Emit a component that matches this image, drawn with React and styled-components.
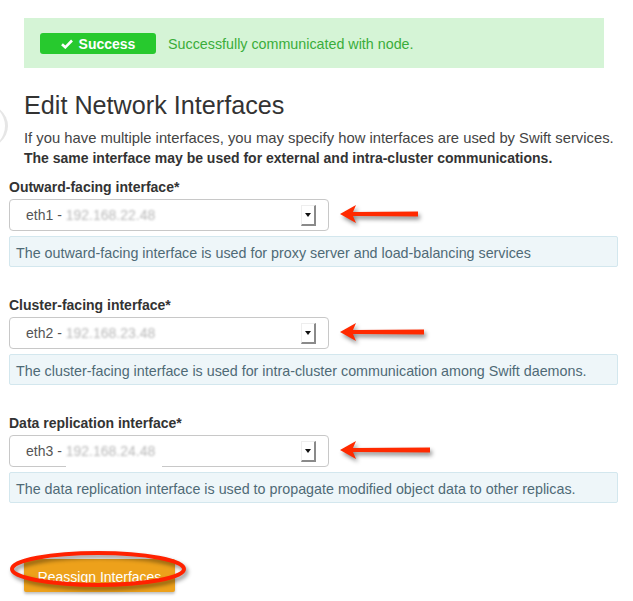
import React from "react";
import styled, { createGlobalStyle } from "styled-components";

const GlobalStyle = createGlobalStyle`
  body {
    margin: 0;
    background: #fff;
    font-family: "Liberation Sans", Arial, sans-serif;
    color: #333;
  }
`;

const interfaces = [
  {
    label: "Outward-facing interface*",
    eth: "eth1",
    ip: "192.168.22.48",
    arrow: 80,
    help: "The outward-facing interface is used for proxy server and load-balancing services",
  },
  {
    label: "Cluster-facing interface*",
    eth: "eth2",
    ip: "192.168.23.48",
    arrow: 86,
    help: "The cluster-facing interface is used for intra-cluster communication among Swift daemons.",
  },
  {
    label: "Data replication interface*",
    eth: "eth3",
    ip: "192.168.24.48",
    arrow: 92,
    patch: true,
    help: "The data replication interface is used to propagate modified object data to other replicas.",
  },
];

const App = () => {
  return (
    <Page>
      <GlobalStyle />
      <EdgeArc />
      <Alert>
        <Badge>
          <Check viewBox="0 0 12 10">
            <path d="M1 5.2 L4.3 8.3 L11 1.5" />
          </Check>
          Success
        </Badge>
        <AlertText>Successfully communicated with node.</AlertText>
      </Alert>

      <Title>Edit Network Interfaces</Title>
      <Intro>
        <span>If you have multiple interfaces, you may specify how interfaces are used by Swift services.</span>
        <br />
        <strong>The same interface may be used for external and intra-cluster communications.</strong>
      </Intro>

      {interfaces.map((item) => (
        <Field key={item.eth}>
          <Label>{item.label}</Label>
          <SelectRow>
            <Select>
              <SelectText>
                {item.eth} - <Blurred>{item.ip}</Blurred>
              </SelectText>
              <ArrowButton>
                <Caret />
              </ArrowButton>
              {item.patch && <WhitePatch />}
            </Select>
            <RedArrow width={item.arrow} />
          </SelectRow>
          <Help>{item.help}</Help>
        </Field>
      ))}

      <ButtonWrap>
        <Button>Reassign Interfaces</Button>
        <Ellipse viewBox="0 0 180 40">
          <ellipse cx="90" cy="20" rx="86" ry="16" />
        </Ellipse>
      </ButtonWrap>
    </Page>
  );
};

const RedArrow = ({ width }) => (
  <ArrowSvg width={width + 6} height="30" viewBox={`0 0 ${width + 6} 30`}>
    <path d={`M2 14 L18 5 L15 12 L${width} 11.5 L${width} 16.5 L15 16 L18 23 Z`} />
  </ArrowSvg>
);

const Page = styled.div`
  position: relative;
  width: 633px;
  height: 601px;
  overflow: hidden;
  padding: 18px 15px 0 9px;
  box-sizing: border-box;
`;

const EdgeArc = styled.div`
  position: absolute;
  left: -45px;
  top: 103px;
  width: 50px;
  height: 46px;
  border-radius: 50%;
  border-right: 3px solid #e6e6e6;
`;

const Alert = styled.div`
  display: flex;
  align-items: center;
  margin-left: 15px;
  width: 580px;
  height: 50px;
  padding: 1px 0 0 16px;
  box-sizing: border-box;
  background: #d5f4d6;
`;

const Badge = styled.span`
  display: inline-flex;
  align-items: center;
  justify-content: center;
  width: 116px;
  height: 21px;
  border-radius: 3px;
  background: #27c92e;
  color: #fff;
  font-weight: bold;
  font-size: 14px;
`;

const Check = styled.svg`
  width: 12px;
  height: 10px;
  margin-right: 6px;
  path {
    fill: none;
    stroke: #fff;
    stroke-width: 2.6;
  }
`;

const AlertText = styled.span`
  margin-left: 12px;
  font-size: 14.3px;
  color: #3aad3a;
`;

const Title = styled.h1`
  margin: 22px 0 0 15px;
  font-size: 25.2px;
  line-height: 30px;
  font-weight: normal;
  color: #333;
`;

const Intro = styled.p`
  margin: 8px 0 0 15px;
  font-size: 14px;
  line-height: 20px;
  color: #444;
  span {
    font-size: 14.8px;
  }
  strong {
    color: #333;
  }
`;

const Field = styled.div`
  margin-top: 9px;
  & + & {
    margin-top: 28px;
  }
`;

const Label = styled.div`
  font-size: 14px;
  line-height: 20px;
  font-weight: bold;
  color: #333;
  margin-bottom: 2px;
`;

const SelectRow = styled.div`
  display: flex;
  align-items: center;
`;

const Select = styled.div`
  position: relative;
  display: flex;
  align-items: center;
  justify-content: space-between;
  width: 320px;
  height: 32px;
  box-sizing: border-box;
  border: 1px solid #c8c8c8;
  border-radius: 4px;
  padding: 0 12px 0 16px;
  background: #fff;
`;

const SelectText = styled.span`
  font-size: 14px;
  color: #555;
`;

const Blurred = styled.span`
  color: #b8b8b8;
  filter: blur(1.3px);
`;

const ArrowButton = styled.span`
  display: flex;
  align-items: center;
  justify-content: center;
  width: 12px;
  height: 18px;
  background: #fff;
  border-left: 1px solid #eee;
  border-top: 1px solid #eee;
  border-right: 2px solid #8a8a8a;
  border-bottom: 2px solid #8a8a8a;
`;

const Caret = styled.span`
  width: 0;
  height: 0;
  border-left: 3px solid transparent;
  border-right: 3px solid transparent;
  border-top: 4px solid #111;
`;

const WhitePatch = styled.span`
  position: absolute;
  left: 56px;
  bottom: -4px;
  width: 96px;
  height: 6px;
  background: #fff;
`;

const ArrowSvg = styled.svg`
  margin-left: 9px;
  filter: drop-shadow(2px 3px 2px rgba(0, 0, 0, 0.45));
  path {
    fill: #ff2a00;
  }
`;

const Help = styled.div`
  margin-top: 5px;
  width: 609px;
  height: 31px;
  box-sizing: border-box;
  padding: 2px 0 0 6px;
  display: flex;
  align-items: center;
  background: #eef6f9;
  border: 1px solid #d3e7ee;
  border-radius: 2px;
  font-size: 14.3px;
  color: #4f6a76;
`;

const ButtonWrap = styled.div`
  position: relative;
  margin: 56px 0 0 15px;
  width: 151px;
`;

const Button = styled.div`
  height: 33px;
  background: #eda11b;
  border-radius: 2px;
  box-shadow: 0 2px 3px rgba(0, 0, 0, 0.25);
  color: #fff;
  font-size: 14px;
  display: flex;
  align-items: center;
  justify-content: center;
  padding-top: 2px;
  box-sizing: border-box;
`;

const Ellipse = styled.svg`
  position: absolute;
  left: -16px;
  top: -10px;
  width: 180px;
  height: 40px;
  overflow: visible;
  filter: drop-shadow(2px 3px 2px rgba(0, 0, 0, 0.45));
  ellipse {
    fill: none;
    stroke: #ff2200;
    stroke-width: 4;
  }
`;

export default App;
